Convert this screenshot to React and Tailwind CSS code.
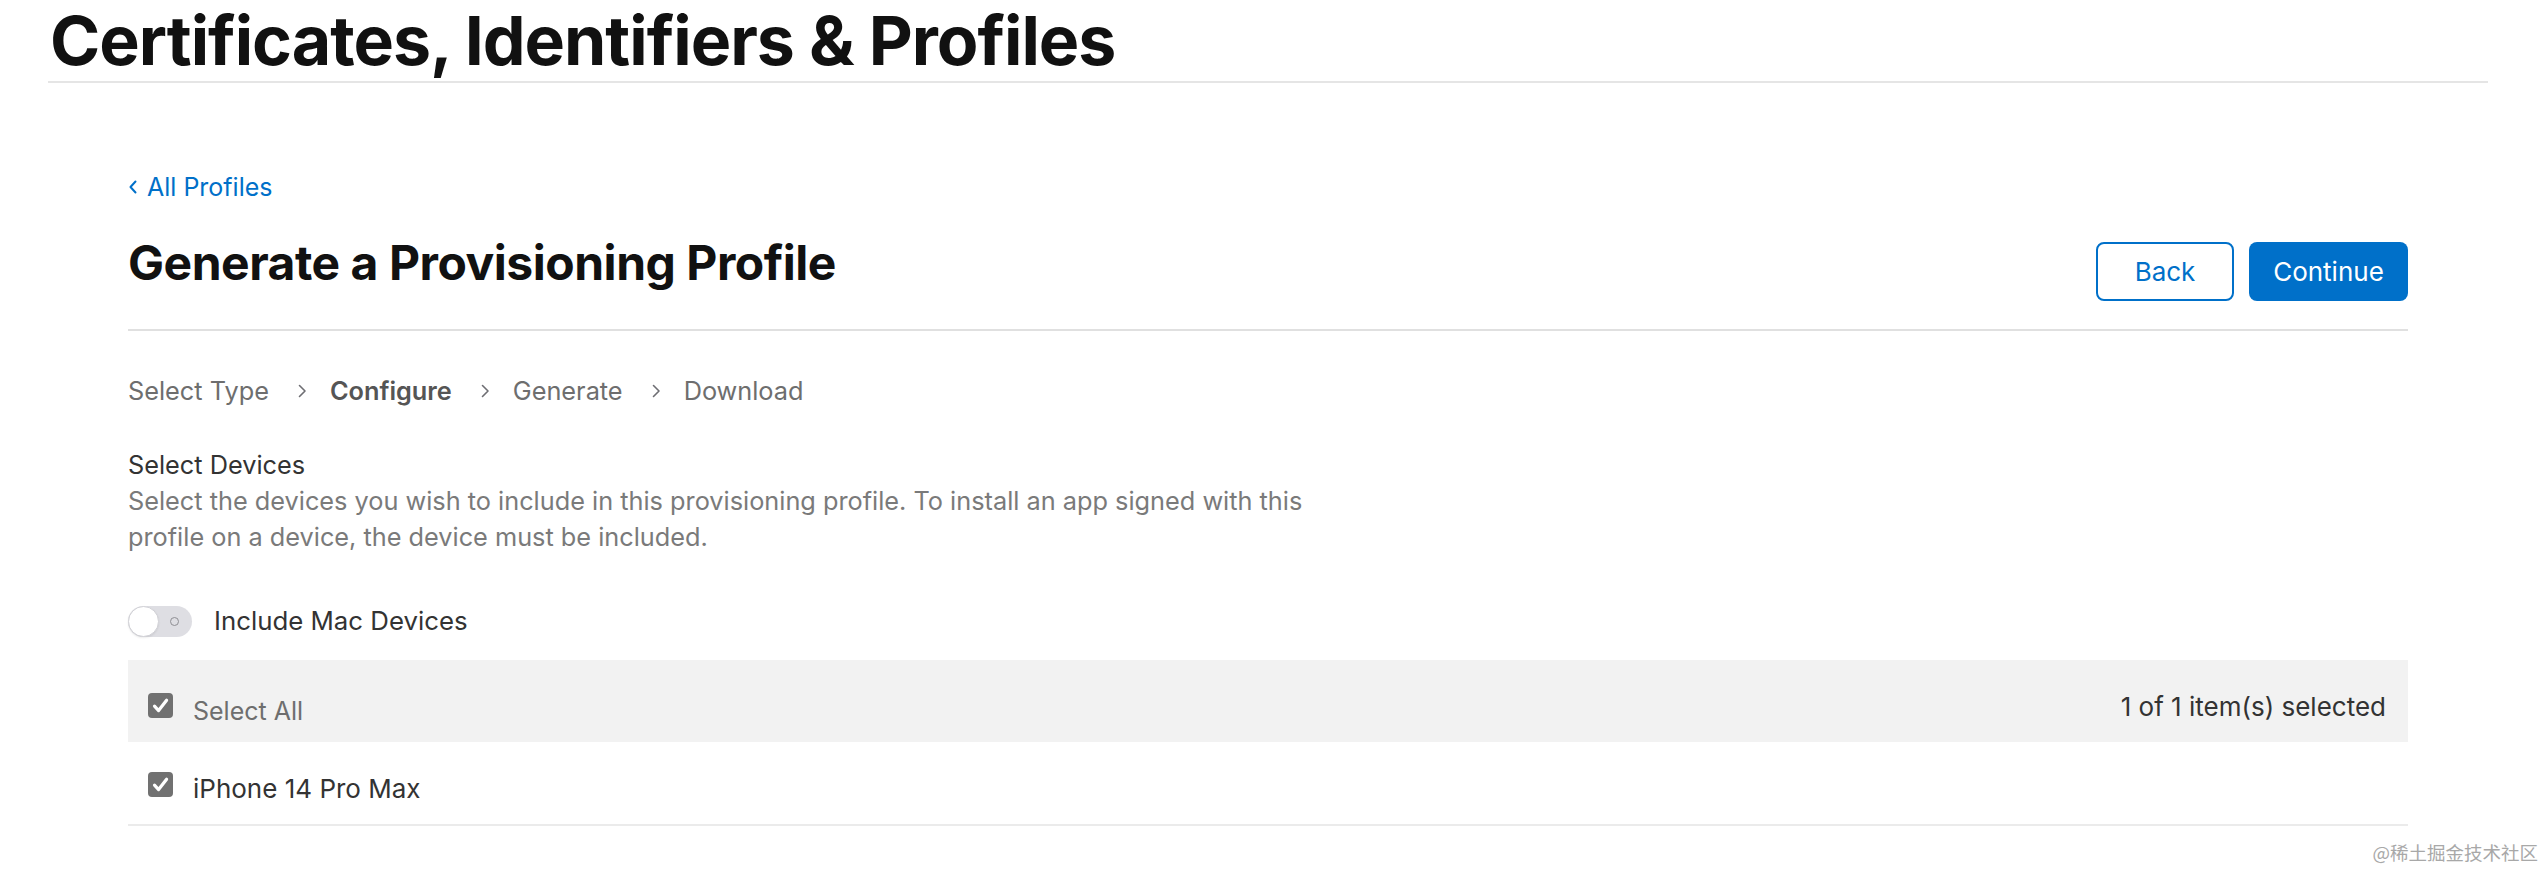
import React from "react";

function Check() {
  return (
    <svg width="25" height="25" viewBox="0 0 25 25" className="shrink-0">
      <rect x="0" y="0" width="25" height="25" rx="4" fill="#717171" />
      <path d="M6.5 13.2 L10.6 17.6 L18.6 7.2" fill="none" stroke="#ffffff" strokeWidth="3.2" strokeLinecap="round" strokeLinejoin="round" />
    </svg>
  );
}

function Chevron() {
  return (
    <svg width="10" height="14" viewBox="0 0 10 14" className="ml-[28px] mr-[23px] shrink-0">
      <path d="M2.5 1.5 L8 7 L2.5 12.5" fill="none" stroke="#6e6e73" strokeWidth="1.6" strokeLinecap="round" strokeLinejoin="round" />
    </svg>
  );
}

export default function App() {
  return (
    <div className="relative w-[2544px] h-[870px] bg-white font-['Inter',sans-serif] overflow-hidden">
      <header className="ml-[48px] w-[2440px] border-b-2 border-[#e5e5e5] pt-[6px] pb-[7px]">
        <h1 className="pl-[2px] text-[68px] leading-[68px] font-bold text-[#111111] tracking-[-0.015em]">
          Certificates, Identifiers &amp; Profiles
        </h1>
      </header>

      <main className="ml-[128px] w-[2280px]">
        <a className="mt-[88px] flex h-[32px] items-center text-[25px] leading-[32px] text-[#0070c9]">
          <svg width="8" height="14" viewBox="0 0 8 14" className="ml-[1px] mr-[10px]">
            <path d="M6.5 1.5 L1.5 7 L6.5 12.5" fill="none" stroke="#0070c9" strokeWidth="2" strokeLinecap="round" strokeLinejoin="round" />
          </svg>
          All Profiles
        </a>

        <div className="mt-[31px] flex items-start justify-between border-b-2 border-[#e0e0e0] pb-[28px]">
          <h2 className="text-[48px] leading-[58px] font-bold text-[#111111] tracking-[-0.01em]">
            Generate a Provisioning Profile
          </h2>
          <div className="mt-[8px] flex gap-[15px]">
            <button className="flex h-[59px] w-[138px] items-center justify-center rounded-[8px] border-2 border-[#0070c9] bg-white text-[26px] text-[#0070c9]">
              Back
            </button>
            <button className="flex h-[59px] w-[159px] items-center justify-center rounded-[8px] bg-[#0070c9] text-[26px] text-white">
              Continue
            </button>
          </div>
        </div>

        <nav className="mt-[42px] flex h-[36px] items-center text-[25.3px] leading-[36px] text-[#6e6e6e]">
          <span>Select Type</span>
          <Chevron />
          <span className="font-semibold text-[#555555]">Configure</span>
          <Chevron />
          <span>Generate</span>
          <Chevron />
          <span>Download</span>
        </nav>

        <h3 className="mt-[38px] text-[25.3px] leading-[36px] text-[#333333]">Select Devices</h3>
        <p className="text-[25.3px] leading-[36px] text-[#7a7a7a]">
          Select the devices you wish to include in this provisioning profile. To install an app signed with this
          <br />
          profile on a device, the device must be included.
        </p>

        <div className="mt-[48px] flex h-[36px] items-center">
          <div className="relative flex h-[31px] w-[64px] items-center rounded-full bg-[#dedee3]">
            <div className="h-[31px] w-[31px] rounded-full border border-[#d2d2d7] bg-white shadow-[0_1px_2px_rgba(0,0,0,0.08)]" />
            <div className="ml-[11px] h-[9px] w-[9px] rounded-full border-[1.5px] border-[#8e8e93]" />
          </div>
          <span className="ml-[22px] text-[25.8px] leading-[36px] text-[#333333]">Include Mac Devices</span>
        </div>

        <div className="mt-[21px] flex h-[82px] items-start justify-between bg-[#f2f2f2] pl-[20px] pr-[22px] pt-[33px]">
          <div className="flex items-start">
            <Check />
            <span className="ml-[20px] text-[25px] leading-[36px] text-[#6e6e6e]">Select All</span>
          </div>
          <span className="mt-[-4px] text-[26px] leading-[36px] text-[#333333]">1 of 1 item(s) selected</span>
        </div>

        <div className="flex h-[84px] items-start border-b-2 border-[#ebebeb] pl-[20px] pt-[30px]">
          <Check />
          <span className="ml-[20px] mt-[-1px] text-[26px] leading-[36px] text-[#333333]">iPhone 14 Pro Max</span>
        </div>
      </main>

      <div className="absolute right-[6px] top-[841px] text-[18.5px] leading-[22px] text-[#a8a8a8] font-['Noto_Sans_CJK_SC',sans-serif]">
        @稀土掘金技术社区
      </div>
    </div>
  );
}
